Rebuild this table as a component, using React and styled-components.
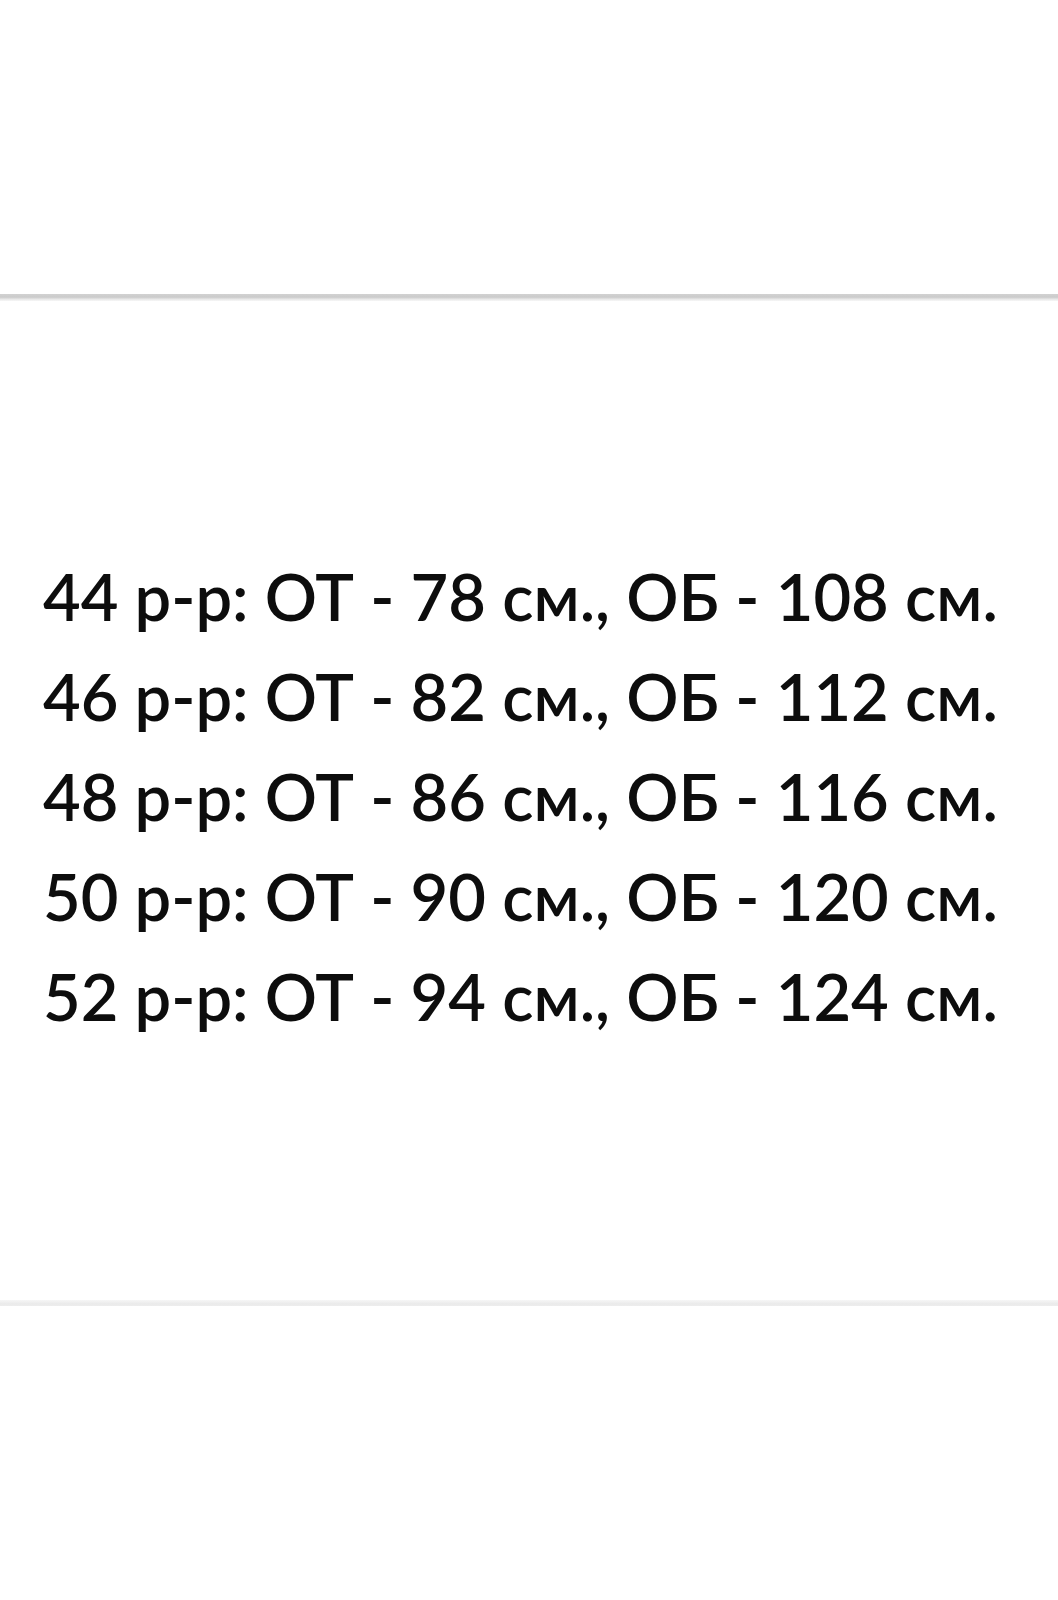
import styled, { createGlobalStyle } from "styled-components";

const sizes = [
  { size: 44, waist: 78, chest: 108 },
  { size: 46, waist: 82, chest: 112 },
  { size: 48, waist: 86, chest: 116 },
  { size: 50, waist: 90, chest: 120 },
  { size: 52, waist: 94, chest: 124 },
];

const GlobalStyle = createGlobalStyle`
  body {
    margin: 0;
    background: #fff;
  }
`;

const Page = styled.main`
  width: 1058px;
  height: 1600px;
  display: flex;
  flex-direction: column;
  background: #fff;
  overflow: hidden;
`;

const Spacer = styled.div`
  height: ${(p) => p.h}px;
  flex-shrink: 0;
`;

const Rule = styled.div`
  height: ${(p) => (p.light ? 6 : 7)}px;
  flex-shrink: 0;
  background: ${(p) =>
    p.light
      ? "linear-gradient(#f6f6f6, #ebebeb 60%, #ededed)"
      : "linear-gradient(#d2d2d2, #cbcbcb 45%, #e8e8e8 75%, #f7f7f7)"};
`;

const Chart = styled.section`
  height: 999px;
  flex-shrink: 0;
  box-sizing: border-box;
  padding: 245px 0 0 43px;
`;

const Line = styled.p`
  margin: 0;
  font-family: Lato, "Liberation Sans", sans-serif;
  font-size: 65px;
  font-weight: 600;
  line-height: 100px;
  color: #0d0d0d;
  white-space: nowrap;
`;

export default function App() {
  return (
    <Page>
      <GlobalStyle />
      <Spacer h={294} />
      <Rule />
      <Chart>
        {sizes.map((s) => (
          <Line key={s.size}>
            {s.size} р-р: ОТ - {s.waist} см., ОБ - {s.chest} см.
          </Line>
        ))}
      </Chart>
      <Rule light />
    </Page>
  );
}
